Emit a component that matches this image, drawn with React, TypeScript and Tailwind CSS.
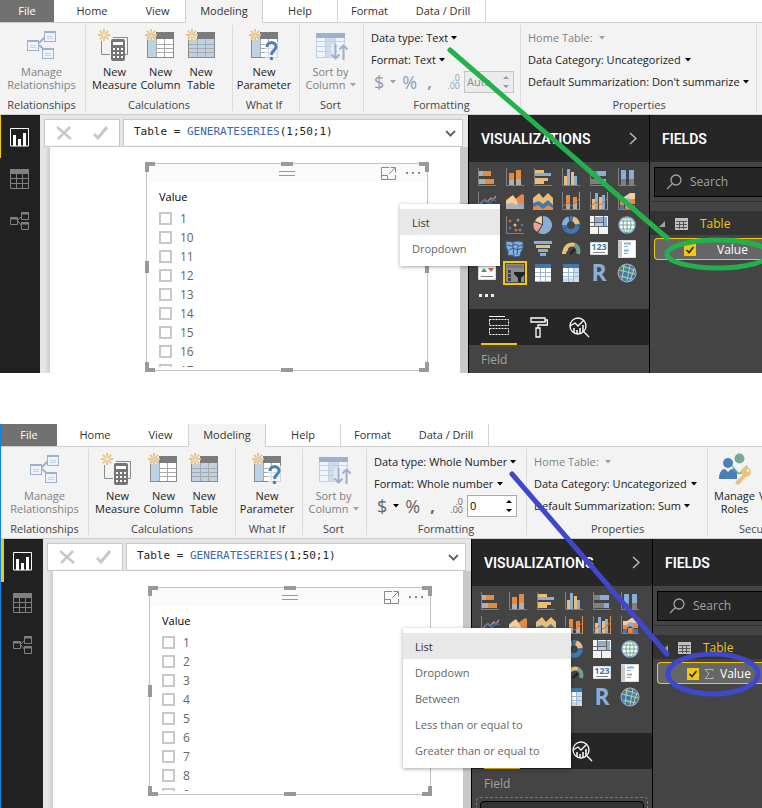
import type { ReactNode } from "react";
import clsx from "clsx";

type Report = {
  framed: boolean;
  dataType: string;
  format: string;
  decimals: string;
  summarization: string;
  numeric: boolean;
  values: string[];
  menu: string[];
};

const textReport: Report = {
  framed: false,
  dataType: "Text",
  format: "Text",
  decimals: "Auto",
  summarization: "Don't summarize",
  numeric: false,
  values: ["1", "10", "11", "12", "13", "14", "15", "16", "17"],
  menu: ["List", "Dropdown"],
};

const numberReport: Report = {
  framed: true,
  dataType: "Whole Number",
  format: "Whole number",
  decimals: "0",
  summarization: "Sum",
  numeric: true,
  values: ["1", "2", "3", "4", "5", "6", "7", "8", "9"],
  menu: [
    "List",
    "Dropdown",
    "Between",
    "Less than or equal to",
    "Greater than or equal to",
  ],
};

/* ---------- ribbon icons ---------- */

const Star = ({ x = 0, y = 0 }: { x?: number; y?: number }) => (
  <g transform={`translate(${x} ${y})`} stroke="#eec27c" strokeWidth="1.8">
    <path d="M6 0v3.4M6 8.6V12M0 6h3.4M8.6 6H12M1.8 1.8l2.4 2.4M7.8 7.8l2.4 2.4M10.2 1.8L7.8 4.2M4.2 7.8l-2.4 2.4" />
    <circle cx="6" cy="6" r="2" fill="none" strokeWidth="1" />
  </g>
);

const RelationshipsIcon = () => (
  <svg width="34" height="34" fill="none">
    <path d="M14 16l8-8M14 18l8 7" stroke="#9fb0cc" strokeWidth="2" />
    {[
      [2, 13],
      [19, 4],
      [17, 21],
    ].map(([x, y]) => (
      <g key={x}>
        <rect x={x + 0.5} y={y + 0.5} width="11" height="10" fill="#eef4fb" stroke="#9fb0cc" />
        <path d={`M${x} ${y + 1}h12`} stroke="#9fb0cc" strokeWidth="2" />
        <path d={`M${x + 3} ${y + 5.5}h6M${x + 3} ${y + 7.5}h6`} stroke="#c3d1e6" />
      </g>
    ))}
  </svg>
);

const MeasureIcon = () => (
  <svg width="34" height="34" fill="none">
    <path d="M16 10.500H30.500V27.500H28M4.500 14V27.500H13" stroke="#8a8a8a" />
    <rect x="14" y="12" width="14" height="22" rx="2" fill="#757575" />
    <rect x="16" y="15" width="10" height="3" fill="#fff" />
    {[21, 25, 29].map((y) =>
      [16, 20, 24].map((x) => (
        <rect key={`${x}-${y}`} x={x} y={y} width="2" height="2" fill="#fff" />
      ))
    )}
    <Star x={1} y={2} />
  </svg>
);

const GridIcon = ({ whole, question }: { whole?: boolean; question?: boolean }) => (
  <svg width="34" height="34" fill="none">
    <rect x="4.500" y="7.500" width="26" height="23" fill="#fff" stroke="#8a8a8a" />
    <path d={whole ? "M5 12h25v18H5z" : "M5 8h8v22H5z"} fill="#bdd2e6" />
    <path
      d={
        whole
          ? "M5 17.500H30M5 21.500H30M5 25.500H30M13.500 12V30M21.500 12V30"
          : "M13 17.500H30M13 21.500H30M13 25.500H30M13.500 12V30M21.500 12V30"
      }
      stroke="#a9a9a9"
    />
    <path d="M13 5h18v7H13z" fill="#7b7b7b" />
    {question && (
      <>
        <path d="M18 15h13v18H18z" fill="#f3f3f3" opacity="0.700" />
        <path
          d="M20 20c0-6 9-6 9 0 0 3.500-4.500 3.500-4.500 8"
          stroke="#4a80b8"
          strokeWidth="3"
        />
        <circle cx="24.500" cy="31.500" r="1.800" fill="#4a80b8" />
      </>
    )}
    <path d="M2 2h10v11H2z" fill="#f3f3f3" opacity="0.600" />
    <Star x={2} y={2} />
  </svg>
);

const SortIcon = () => (
  <svg width="34" height="34" fill="none">
    <rect x="2.500" y="6.500" width="28" height="24" fill="#eff5fc" stroke="#c3cfe2" />
    <path d="M12 10h9v20h-9z" fill="#cfdcee" />
    <path d="M2 14.500h29M2 19.500h29M2 24.500h29M11.500 10v20M21.500 10v20" stroke="#c3cfe2" />
    <path d="M2 6h29v5H2z" fill="#9fb0cc" />
    <path d="M17 17h15v16H17z" fill="#f3f3f3" opacity="0.600" />
    <path
      d="M21.500 17v15M17.500 27.500l4 4 4-4M29.500 33V18M25.500 22.500l4-4 4 4"
      stroke="#9fb0cc"
      strokeWidth="2"
    />
  </svg>
);

const RolesIcon = () => (
  <svg width="34" height="34" fill="none">
    <circle cx="21.500" cy="7.500" r="5" fill="#78a898" />
    <path d="M14 14l7 8 8-8 1 9H16z" fill="#78a898" />
    <circle cx="10" cy="12" r="5" fill="#4a80b8" />
    <path d="M1 28c0-7 3-10 6-10l3 3 3-3c4 0 7 3 6 10z" fill="#4a80b8" />
    <circle cx="28" cy="21" r="5" fill="#eec27c" />
    <circle cx="30" cy="19.500" r="1.300" fill="#fff" />
    <path d="M26 23l-8 8v2h3l7-8z" fill="#eec27c" stroke="#eec27c" />
  </svg>
);

const Caret = ({ muted }: { muted?: boolean }) => (
  <svg
    width="6"
    height="4"
    className={clsx("shrink-0", muted ? "text-gray-400" : "text-black")}
  >
    <path d="M0 0h6L3 3.500z" fill="currentColor" />
  </svg>
);

/* ---------- ribbon ---------- */

const Group = ({
  label,
  className,
  children,
}: {
  label: string;
  className: string;
  children: ReactNode;
}) => (
  <section
    className={clsx(
      "flex h-[86px] shrink-0 flex-col border-r border-[#dcdcdc]",
      className
    )}
  >
    {children}
    <h3 className="mt-auto text-center leading-3 text-[#444]">{label}</h3>
  </section>
);

const BigButton = ({
  icon,
  lines,
  caret,
  disabled,
}: {
  icon: ReactNode;
  lines: [string, string];
  caret?: boolean;
  disabled?: boolean;
}) => (
  <button
    disabled={disabled}
    className="flex flex-col items-center pt-0.5 whitespace-nowrap leading-[13px] text-[#222] disabled:text-[#808080]"
  >
    <span className="mb-1">{icon}</span>
    <span>{lines[0]}</span>
    <span className="flex items-center gap-1">
      {lines[1]}
      {caret && <Caret muted />}
    </span>
  </button>
);

const Picker = ({
  label,
  value,
  disabled,
}: {
  label: string;
  value?: string;
  disabled?: boolean;
}) => (
  <label
    className={clsx(
      "flex h-[22px] items-center gap-[3px] whitespace-nowrap",
      disabled ? "text-[#808080]" : "text-[#222]"
    )}
  >
    {label}
    <select className="appearance-none" disabled={disabled} defaultValue={value}>
      <option>{value}</option>
    </select>
    <Caret muted={disabled} />
  </label>
);

const Tab = ({ name, className }: { name: string; className: string }) => (
  <button className={clsx("h-[22px] text-[#333]", className)}>{name}</button>
);

const Ribbon = ({ report }: { report: Report }) => {
  const { framed, numeric } = report;
  return (
    <header className="text-[11px]">
      <nav className="flex h-[23px] border-b border-[#cfcfcf] bg-white">
        <button
          className={clsx("h-[22px] bg-[#717171] text-white", framed ? "w-[56px]" : "w-[54px]")}
        >
          File
        </button>
        <Tab name="Home" className="w-[76px]" />
        <Tab name="View" className="w-[55px]" />
        <button className="-mb-px h-[23px] w-[78px] border-x border-[#cfcfcf] bg-[#f3f3f3] text-[#333]">
          Modeling
        </button>
        <Tab name="Help" className="w-[75px] border-r border-[#d4d4d4]" />
        <Tab name="Format" className="w-[63px]" />
        <Tab name="Data / Drill" className="w-[85px] border-r border-[#d4d4d4]" />
      </nav>
      <div
        className={clsx(
          "flex overflow-hidden border-b border-[#cfcfcf] bg-[#f3f3f3] pt-0.5 pb-[3px]",
          framed && "pl-0.5"
        )}
      >
        <Group label="Relationships" className="w-[86px] pr-1.5 pl-1">
          <BigButton disabled icon={<RelationshipsIcon />} lines={["Manage", "Relationships"]} />
        </Group>
        <Group label="Calculations" className="w-[147px] px-1.5">
          <div className="flex justify-between pr-2">
            <BigButton icon={<MeasureIcon />} lines={["New", "Measure"]} />
            <BigButton icon={<GridIcon />} lines={["New", "Column"]} />
            <BigButton icon={<GridIcon whole />} lines={["New", "Table"]} />
          </div>
        </Group>
        <Group label="What If" className="w-[67px] pr-1">
          <BigButton icon={<GridIcon question />} lines={["New", "Parameter"]} />
        </Group>
        <Group label="Sort" className="w-[64px] pr-0.5">
          <BigButton disabled caret icon={<SortIcon />} lines={["Sort by", "Column"]} />
        </Group>
        <Group label="Formatting" className={clsx("pt-0.5 pr-2 pl-[7px]", numeric ? "w-[160px]" : "w-[157px]")}>
          <Picker label="Data type:" value={report.dataType} />
          <Picker label="Format:" value={report.format} />
          <div
            className={clsx(
              "flex h-[22px] w-[143px] shrink-0 items-center pl-[3px]",
              numeric ? "text-[#666]" : "text-[#8c9cb8]"
            )}
          >
            <button aria-label="Currency" className="flex items-center gap-1.5 text-lg leading-5">
              $<Caret muted={!numeric} />
            </button>
            <button aria-label="Percent" className="ml-1.5 text-lg leading-5">%</button>
            <button aria-label="Thousands separator" className="ml-2.5 text-base leading-5 font-bold">,</button>
            <button
              aria-label="Decimal places"
              className="mr-1 ml-auto flex flex-col items-end text-[9px] leading-[8px]"
            >
              <span>.0</span>
              <span>.00</span>
            </button>
            <div
              className={clsx(
                "flex h-[22px] w-[50px] items-center border pr-1",
                numeric ? "border-[#ababab] bg-white text-black" : "border-[#c6c6c6] bg-[#ebebeb] text-[#8a8a8a]"
              )}
            >
              <input
                aria-label="Decimals"
                defaultValue={report.decimals}
                disabled={!numeric}
                className="w-0 flex-1 pl-0.5"
              />
              <svg width="6" height="14" className={numeric ? "text-black" : "text-[#8c9cb8]"}>
                <path d="M0 4h6L3 1zM0 10h6l-3 3z" fill="currentColor" />
              </svg>
            </div>
          </div>
        </Group>
        <Group label="Properties" className={clsx("pt-0.5 pr-1.5 pl-[7px]", numeric ? "w-[181px]" : "w-[236px]")}>
          <Picker disabled label="Home Table:" />
          <Picker label="Data Category:" value="Uncategorized" />
          <Picker label="Default Summarization:" value={report.summarization} />
        </Group>
        <Group label="Security" className="w-[98px] pl-1.5">
          <div className="flex gap-1">
            <BigButton icon={<RolesIcon />} lines={["Manage", "Roles"]} />
            <BigButton icon={<RolesIcon />} lines={["View as", "Roles"]} />
          </div>
        </Group>
      </div>
    </header>
  );
};

/* ---------- left navigation ---------- */

const SideNav = ({ framed }: { framed: boolean }) => (
  <nav
    className={clsx(
      "flex shrink-0 flex-col bg-[#212121] text-[#808080]",
      framed ? "w-[42px]" : "w-10"
    )}
  >
    <button
      aria-label="Report"
      className={clsx(
        "flex h-[43px] items-center border-[#f2c80f] pt-0.5 pl-[9px] text-white",
        framed ? "border-l-[3px]" : "border-l"
      )}
    >
      <svg width="19" height="19" fill="none" stroke="currentColor">
        <path d="M.5.500h18v17.500H.5z" />
        <path d="M4.500 7v11M9.500 11v7M14.500 5v13" strokeWidth="3" />
      </svg>
    </button>
    <button aria-label="Data" className={clsx("flex h-[42px] items-center", framed ? "pl-3" : "pl-2.5")}>
      <svg width="19" height="20" fill="none" stroke="currentColor">
        <path d="M.5.500h18v19H.5zM0 9.500h19M0 14.500h19M6.500 5v15M12.500 5v15" />
        <path d="M0 2.500h19" strokeWidth="5" />
      </svg>
    </button>
    <button aria-label="Model" className={clsx("flex h-[42px] items-center", framed ? "pl-3" : "pl-2.5")}>
      <svg width="19" height="18" fill="none" stroke="currentColor">
        <path d="M.5 5.500h7v7h-7zM11.500.500h7v7h-7zM11.500 10.500h7v7h-7z" />
        <path d="M0 6.500h8M11 1.500h8M11 11.500h8" strokeWidth="2" />
        <path d="M8 8l3-3M8 9l3 4" />
      </svg>
    </button>
  </nav>
);

/* ---------- canvas ---------- */

const Slicer = ({ values, id }: { values: string[]; id: string }) => (
  <article className="relative mt-4 mr-8 ml-24 border border-[#c4c4c4] bg-white pb-[3px]">
    <div className="flex h-[18px] items-center bg-[#fafafa] px-1.5">
      <span className="flex-1" />
      <svg width="16" height="5" stroke="#999">
        <path d="M0 .5h16M0 4.500h16" />
      </svg>
      <div className="flex flex-1 items-center justify-end gap-2.5 text-[#888]">
        <button aria-label="Focus mode">
          <svg width="15" height="13" fill="none" stroke="currentColor">
            <path d="M8 .5H.5v12h14V8M.5 8.500h6v4M8 7l6-6M9.500.500h5v5" />
          </svg>
        </button>
        <button aria-label="More options">
          <svg width="15" height="2" fill="currentColor">
            <path d="M0 0h2v2H0zM6 0h2v2H6zM12 0h2v2h-2z" />
          </svg>
        </button>
      </div>
    </div>
    <h2 className="mt-[7px] pl-3 leading-4 text-black">Value</h2>
    <ul className="mt-1 h-[158px] overflow-hidden pl-3">
      {values.map((v) => (
        <li key={v} className="flex h-[19px] items-center gap-2">
          <input
            type="checkbox"
            id={`${id}-${v}`}
            className="size-[13px] appearance-none border-2 border-[#c8c8c8] bg-white"
          />
          <label htmlFor={`${id}-${v}`} className="text-xs text-[#666]">
            {v}
          </label>
        </li>
      ))}
    </ul>
    <i className="absolute -top-0.5 -left-0.5 size-2.5 border-t-4 border-l-4 border-[#999]" />
    <i className="absolute -top-0.5 -right-0.5 size-2.5 border-t-4 border-r-4 border-[#999]" />
    <i className="absolute -bottom-0.5 -left-0.5 size-2.5 border-b-4 border-l-4 border-[#999]" />
    <i className="absolute -right-0.5 -bottom-0.5 size-2.5 border-r-4 border-b-4 border-[#999]" />
    <i className="absolute -top-0.5 left-1/2 h-1 w-3 -translate-x-1/2 bg-[#999]" />
    <i className="absolute -bottom-0.5 left-1/2 h-1 w-3 -translate-x-1/2 bg-[#999]" />
    <i className="absolute top-1/2 -left-0.5 h-3 w-1 -translate-y-1/2 bg-[#999]" />
    <i className="absolute top-1/2 -right-0.5 h-3 w-1 -translate-y-1/2 bg-[#999]" />
  </article>
);

const Canvas = ({ report }: { report: Report }) => (
  <main className="flex min-w-0 flex-1 flex-col bg-[#e6e6e6] text-[11px]">
    <div className="flex h-8 gap-[3px] pt-1 pr-[5px] pl-1">
      <div className="flex w-[76px] items-center justify-around border border-[#c8c8c8] bg-white text-[#c8c8c8]">
        <button aria-label="Cancel">
          <svg width="16" height="14" fill="none" stroke="currentColor" strokeWidth="2.500">
            <path d="M1 1l14 12M14 1L2 13" />
          </svg>
        </button>
        <button aria-label="Commit">
          <svg width="15" height="14" fill="none" stroke="currentColor" strokeWidth="3">
            <path d="M1 8l4 4 9-11" />
          </svg>
        </button>
      </div>
      <div className="flex flex-1 justify-between border border-[#c8c8c8] bg-white pr-1.5 pl-2.5">
        <div
          role="textbox"
          aria-label="Formula"
          contentEditable
          suppressContentEditableWarning
          className="py-1 font-['DejaVu_Sans_Mono',monospace] leading-4 whitespace-pre text-[#222]"
        >
          Table = <span className="text-[#3a66b8]">GENERATESERIES</span>(1;50;1)
        </div>
        <button aria-label="Expand formula">
          <svg width="11" height="7" fill="none" stroke="#666" strokeWidth="2">
            <path d="M1 1l4.500 4.500L10 1" />
          </svg>
        </button>
      </div>
    </div>
    <div className="mr-2 ml-2.5 flex-1 bg-white shadow-[8px_0_0_#c8c8c8,-3px_0_3px_#cfcfcf]">
      <Slicer values={report.values} id={report.numeric ? "num" : "text"} />
    </div>
  </main>
);

/* ---------- visualizations pane ---------- */

const ORANGE = "#e58b3f";
const TAN = "#e9bf78";
const SKY = "#8aafd6";
const BLUE = "#3f78b5";
const GREY = "#b0b0b0";
const DIM = "#808080";
const RED = "#d9603b";

const Axis = () => <path d="M.5 0v17.500H18" fill="none" stroke={DIM} />;

const Box = ({ x, y, w, h, c }: { x: number; y: number; w: number; h: number; c: string }) => (
  <rect x={x} y={y} width={w} height={h} fill={c} />
);

const visuals: { name: string; art: ReactNode }[] = [
  {
    name: "Stacked bar chart",
    art: (
      <>
        <Axis />
        <Box x={1} y={3} w={4} h={5} c={GREY} />
        <Box x={5} y={3} w={8} h={5} c={ORANGE} />
        <Box x={1} y={11} w={7} h={5} c={GREY} />
        <Box x={7} y={11} w={9} h={5} c={ORANGE} />
      </>
    ),
  },
  {
    name: "Stacked column chart",
    art: (
      <>
        <Axis />
        <Box x={3} y={5} w={5} h={7} c={ORANGE} />
        <Box x={3} y={12} w={5} h={5} c={GREY} />
        <Box x={10} y={2} w={5} h={9} c={ORANGE} />
        <Box x={10} y={11} w={5} h={6} c={GREY} />
      </>
    ),
  },
  {
    name: "Clustered bar chart",
    art: (
      <>
        <Axis />
        <Box x={1} y={2} w={9} h={3} c={TAN} />
        <Box x={1} y={5} w={16} h={3} c={SKY} />
        <Box x={1} y={10} w={13} h={3} c={TAN} />
        <Box x={1} y={13} w={9} h={3} c={TAN} />
      </>
    ),
  },
  {
    name: "Clustered column chart",
    art: (
      <>
        <Axis />
        <Box x={2} y={8} w={3} h={9} c={TAN} />
        <Box x={5} y={1} w={3} h={16} c={SKY} />
        <Box x={9} y={4} w={3} h={13} c={TAN} />
        <Box x={12} y={8} w={3} h={9} c={SKY} />
      </>
    ),
  },
  {
    name: "100% stacked bar chart",
    art: (
      <>
        <Axis />
        <Box x={1} y={3} w={6} h={5} c={DIM} />
        <Box x={7} y={3} w={9} h={5} c={SKY} />
        <Box x={1} y={11} w={10} h={5} c={DIM} />
        <Box x={11} y={11} w={5} h={5} c={SKY} />
      </>
    ),
  },
  {
    name: "100% stacked column chart",
    art: (
      <>
        <Axis />
        <Box x={3} y={2} w={5} h={9} c={SKY} />
        <Box x={3} y={11} w={5} h={6} c={DIM} />
        <Box x={11} y={2} w={5} h={9} c={SKY} />
        <Box x={11} y={11} w={5} h={6} c={DIM} />
      </>
    ),
  },
  {
    name: "Line chart",
    art: (
      <>
        <Axis />
        <path d="M1 13l5-5 3 2 4-4 2 2 3-4" fill="none" stroke="#c98a80" strokeWidth="1.300" />
        <path d="M1 15l6-8 4 5 4-5 3 2" fill="none" stroke={BLUE} strokeWidth="1.300" />
      </>
    ),
  },
  {
    name: "Area chart",
    art: (
      <>
        <path d="M0 17V8l5-4 4 3 7-5 2 1v14z" fill={ORANGE} />
        <path d="M0 13V9l7-6 4 6 2 5z" fill="#f0cfa0" />
        <path d="M0 17v-5l6-1 12 6z" fill={GREY} />
        <path d="M10 13l4-2 4 2v4z" fill={SKY} />
      </>
    ),
  },
  {
    name: "Stacked area chart",
    art: (
      <>
        <path d="M-1 15V6l6-5 4 5 5-5 5 5v9z" fill={TAN} />
        <path d="M-1 17v-6l6-2 4 3 5-4 5 5v4z" fill={BLUE} />
        <path d="M-1 18v-3l5-2 5 4 5-4 5 3v2z" fill={ORANGE} />
      </>
    ),
  },
  {
    name: "Line and stacked column chart",
    art: (
      <>
        <Axis />
        <path d="M17.500 0v18" stroke={ORANGE} />
        <Box x={4} y={3} w={4} h={9} c={ORANGE} />
        <Box x={4} y={12} w={4} h={5} c={GREY} />
        <Box x={11} y={5} w={4} h={6} c={ORANGE} />
        <Box x={11} y={11} w={4} h={6} c={GREY} />
        <path d="M1 14l5-3 4 3 7-7" fill="none" stroke={RED} />
      </>
    ),
  },
  {
    name: "Line and clustered column chart",
    art: (
      <>
        <Axis />
        <path d="M17.500 0v18" stroke={ORANGE} />
        <Box x={2} y={7} w={3} h={10} c={TAN} />
        <Box x={5} y={1} w={3} h={16} c={SKY} />
        <Box x={9} y={5} w={3} h={12} c={TAN} />
        <Box x={12} y={3} w={3} h={14} c={SKY} />
        <path d="M1 14l5-4 4 3 7-6" fill="none" stroke={RED} />
      </>
    ),
  },
  {
    name: "Ribbon chart",
    art: (
      <>
        <Axis />
        <path d="M2 5h4l6-4h5v6h-5l-6 3H2z" fill="#f0cfa0" />
        <path d="M6 8l3-2 3 1v5l-3-2-3 2z" fill={SKY} />
        <path d="M2 9h4v4H2zM12 7h5v5h-5zM7 12h4v5H7z" fill={ORANGE} />
        <path d="M2 13h4v4H2zM13 13h4v4h-4z" fill={BLUE} />
        <path d="M11 12h2v5h-2z" fill={RED} />
      </>
    ),
  },
  {
    name: "Waterfall chart",
    art: (
      <>
        <Axis />
        <Box x={2} y={9} w={4} h={8} c={SKY} />
        <Box x={7} y={5} w={4} h={5} c={ORANGE} />
        <Box x={12} y={2} w={4} h={15} c={SKY} />
      </>
    ),
  },
  {
    name: "Scatter chart",
    art: (
      <>
        <Axis />
        <circle cx="4" cy="5" r="1.500" fill={RED} />
        <circle cx="12" cy="4" r="1.500" fill="#6f9f90" />
        <circle cx="9" cy="9" r="1.500" fill={TAN} />
        <circle cx="4" cy="12" r="1.500" fill={BLUE} />
        <circle cx="10" cy="14" r="1.500" fill={RED} />
        <circle cx="16" cy="9" r="1.500" fill={BLUE} />
        <circle cx="14" cy="14" r="1.500" fill={DIM} />
      </>
    ),
  },
  {
    name: "Pie chart",
    art: (
      <>
        <path d="M9 9V0a9 9 0 1 1-5 16.500z" fill={SKY} />
        <path d="M8 8V0a9 9 0 0 0-7 5z" fill="#f0cfa0" />
        <path d="M8 9L0 6a9 9 0 0 0 3 10z" fill="#e3a596" />
      </>
    ),
  },
  {
    name: "Donut chart",
    art: (
      <g fill="none" strokeWidth="5">
        <circle cx="9" cy="9" r="6.500" stroke={BLUE} />
        <path d="M11 2.800A6.500 6.500 0 0 1 15.300 8" stroke={TAN} />
        <path d="M2.500 9A6.500 6.500 0 0 1 7 2.800" stroke={SKY} />
        <path d="M15.500 9.500l2.500.5M2 13l3-2M7 0l1 5" stroke="#444" strokeWidth="1" />
      </g>
    ),
  },
  {
    name: "Treemap",
    art: (
      <>
        <path d="M0 0h18v18H0z" fill="#f4f4f4" />
        <path d="M5 1h8v5H5zM14 1h3v9h-3z" fill={SKY} />
        <path d="M5 7h8v3H5z" fill="#b9cee6" />
        <path d="M4.500 0v11M0 10.500h18M8.500 11v7M13.500 0v10M5 6.500h8M0 6.500h4" stroke="#666" fill="none" />
      </>
    ),
  },
  {
    name: "Map",
    art: (
      <>
        <circle cx="9" cy="9" r="8" fill="#fff" stroke={SKY} strokeWidth="1.500" />
        <ellipse cx="9" cy="9" rx="4" ry="8" fill="none" stroke="#6ea78f" />
        <path d="M9 1v16M1 9h16M2.500 5h13M2.500 13h13" stroke="#6ea78f" />
      </>
    ),
  },
  {
    name: "Filled map",
    art: <path d="M1 2h7l3 3 6-3v13l-5-2-4 4-7-3z" fill={SKY} />,
  },
  {
    name: "Shape map",
    art: (
      <>
        <path d="M0 1l6 1 6-1 5 1v6l-2 4-1 4-5 1-4-2-3 1V11l-2-4z" fill={SKY} stroke="#2f5d94" />
        <path d="M1 5l5 1 3-2 4 2 4-1M3 10l4-2 4 2 5-2M7 2v6l1 8M12 6l-1 9" stroke="#2f5d94" fill="none" />
      </>
    ),
  },
  {
    name: "Funnel",
    art: (
      <>
        <Box x={0} y={1} w={18} h={3} c={SKY} />
        <Box x={2} y={5} w={14} h={3} c={TAN} />
        <Box x={4} y={9} w={10} h={3} c={SKY} />
        <Box x={6} y={13} w={6} h={3} c={SKY} />
      </>
    ),
  },
  {
    name: "Gauge",
    art: (
      <g fill="none" strokeWidth="4">
        <path d="M2 14a7 7 0 0 1 3.500-6" stroke={TAN} />
        <path d="M3 10a7.500 7.500 0 0 1 10-5" stroke={TAN} />
        <path d="M13 5a8 8 0 0 1 3 9" stroke="#6f9f90" />
        <path d="M8 14l5-5" stroke="#222" strokeWidth="2" />
      </g>
    ),
  },
  {
    name: "Card",
    art: (
      <>
        <path d="M.5 2.500h17v12H.5z" fill="#fff" stroke="#ddd" />
        <text x="9" y="10" textAnchor="middle" fontSize="9" fontWeight="700" fill={BLUE}>
          123
        </text>
        <path d="M3 12.500h12" stroke={DIM} />
      </>
    ),
  },
  {
    name: "Multi-row card",
    art: (
      <>
        <path d="M.5.500h17v17H.5z" fill="#fff" stroke="#ddd" />
        <path d="M0 1h4v16H0z" fill="#c9c9c9" />
        <path d="M6 3.500h7M6 10.500h5" stroke={SKY} strokeWidth="2" />
        <path d="M6 6.500h4M6 13.500h4" stroke={SKY} />
      </>
    ),
  },
  {
    name: "KPI",
    art: (
      <>
        <path d="M.5 2.500h17v13H.5z" fill="#fff" stroke="#ddd" />
        <path d="M3 8l3-4 3 4z" fill="#4e9a7c" />
        <path d="M10 4h6l-3 4z" fill={RED} />
        <path d="M3 12.500h12" stroke={DIM} />
      </>
    ),
  },
  {
    name: "Slicer",
    art: (
      <>
        <path d="M0 0h18v18H0z" fill="#8c8c8c" />
        <path d="M1 1h16v3H1z" fill="#777" />
        <path d="M2 6h3v3H2zM2 10h3v3H2zM2 14h3v3H2z" fill="#444" />
        <path d="M8 8h11v2l-4 4v4h-3v-4l-4-4z" fill="#222" />
      </>
    ),
  },
  {
    name: "Table",
    art: (
      <>
        <path d="M1 0h16v18H1z" fill="#fff" />
        <path d="M1 0h16v4H1z" fill={BLUE} />
        <path d="M1 8.500h16M1 12.500h16M6.500 4v14M11.500 4v14M1 17.500h16" stroke="#9db7d3" />
      </>
    ),
  },
  {
    name: "Matrix",
    art: (
      <>
        <path d="M1 0h16v18H1z" fill="#fff" />
        <path d="M12 4h5v14h-5zM1 14h16v4H1z" fill="#ccdcec" />
        <path d="M1 0h16v4H1z" fill={BLUE} />
        <path d="M1 8.500h16M1 12.500h16M6.500 4v14M11.500 4v14" stroke="#9db7d3" />
      </>
    ),
  },
  {
    name: "R script visual",
    art: (
      <text x="9" y="17" textAnchor="middle" fontSize="23" fontWeight="700" fill={SKY}>
        R
      </text>
    ),
  },
  {
    name: "ArcGIS map",
    art: (
      <>
        <circle cx="9" cy="9" r="9" fill="#3976b0" stroke="#b5b5b5" />
        <path d="M3 4l5-2 1 4-4 3zM11 8l4-3 2 4-4 3zM4 12l4-1 1 5-3-1z" fill="#3fa35f" />
        <path d="M1 6l16 4M2 12l13 3M4 2l13 4M6 1l-2 15M12 1L9 17M16 5l-4 12" stroke="#c4c4c4" fill="none" />
      </>
    ),
  },
];

const Visualizations = ({ numeric }: { numeric: boolean }) => (
  <aside className="flex w-[181px] shrink-0 flex-col border-l border-black bg-[#444]">
    <div className="flex h-[47px] items-center justify-between bg-[#262626] pr-3 pl-3 text-white">
      <h2 className="font-[Roboto,sans-serif] text-sm font-semibold">VISUALIZATIONS</h2>
      <button aria-label="Collapse">
        <svg width="8" height="13" fill="none" stroke="#bbb" strokeWidth="1.500">
          <path d="M1 1l6 5.500L1 12" />
        </svg>
      </button>
    </div>
    <div className="grid grid-cols-[repeat(6,28px)] pt-[3px] pl-1">
      {visuals.map(({ name, art }) => (
        <button
          key={name}
          aria-label={name}
          className="flex h-6 w-7 items-center justify-center"
        >
          <svg
            width="18"
            height="18"
            overflow="visible"
            className={clsx(name === "Slicer" && "outline-2 outline-offset-1 outline-[#f2c80f]")}
          >
            {art}
          </svg>
        </button>
      ))}
    </div>
    <button aria-label="Import visual" className="mb-1 h-5 pl-2.5">
      <svg width="16" height="3" fill="#eee">
        <path d="M0 0h3v3H0zM6 0h3v3H6zM12 0h3v3h-3z" />
      </svg>
    </button>
    <div className="flex h-9 shrink-0 bg-[#262626] pl-3 text-white">
      <button aria-label="Fields" className="flex w-9 items-center justify-center border-b-2 border-[#f2c80f]">
        <svg width="20" height="20" fill="none" stroke="currentColor">
          <path d="M0 .5h16" />
          <path d="M.5 3.500h19v6H.5zM.5 12.500h19v6H.5z" strokeDasharray="2 1" />
        </svg>
      </button>
      <button aria-label="Format" className="flex w-11 items-center justify-center">
        <svg width="18" height="21" fill="none" stroke="currentColor" strokeWidth="1.300">
          <path d="M1 1h14v4H1zM15 3h2.300v5H8v3M6 11h4v9H6z" />
        </svg>
      </button>
      <button aria-label="Analytics" className="flex w-9 items-center justify-center">
        <svg width="21" height="21" fill="none" stroke="currentColor" strokeWidth="1.300">
          <circle cx="9" cy="9" r="8" />
          <path d="M15 15l5 5M1 9l5-3 3 3 6-6" />
          <path d="M5 16v-5M8 17v-4M11 17v-6M14 15V8" strokeWidth="1.500" />
        </svg>
      </button>
    </div>
    <h3 className="pt-1.5 pl-3 text-xs leading-[18px] text-[#a3a3a3]">Field</h3>
    {numeric && (
      <div className="mx-1 mt-1 h-8 rounded border border-dashed border-[#777] p-[3px]">
        <div className="h-6 rounded border border-black bg-[#333]" />
      </div>
    )}
  </aside>
);

/* ---------- fields pane ---------- */

const Fields = ({ framed, numeric }: { framed: boolean; numeric: boolean }) => (
  <aside
    className={clsx(
      "shrink-0 overflow-hidden border-l border-black bg-[#444] text-xs",
      framed ? "w-[110px]" : "w-[113px]"
    )}
  >
    <div className="flex h-[47px] items-center bg-[#262626] pl-3 text-white">
      <h2 className="font-[Roboto,sans-serif] text-sm font-semibold">FIELDS</h2>
    </div>
    <label className="mt-[5px] ml-1 flex h-[30px] items-center gap-2 border border-r-0 border-black bg-[#262626] pl-[11px] text-[#a3a3a3]">
      <svg width="16" height="16" fill="none" stroke="currentColor" strokeWidth="1.300" className="shrink-0">
        <circle cx="10" cy="6" r="5" />
        <path d="M6.500 9.500L1 15" />
      </svg>
      <input
        placeholder="Search"
        aria-label="Search"
        className="w-0 flex-1 placeholder:text-[#a3a3a3]"
      />
    </label>
    <div className="mt-1 h-2.5 border-t border-[#333]" />
    <div className="flex h-6 items-center bg-[#333] pt-0.5 pl-[9px] text-[#f2c80f]">
      <svg width="6" height="6" fill="#a3a3a3">
        <path d="M6 0v6H0z" />
      </svg>
      <svg width="13" height="12" fill="none" stroke="#555" className="mr-3 ml-2.5">
        <path d="M0 0h13v12H0z" fill="#c0c0c0" stroke="none" />
        <path d="M1 3.500h11M1 6.500h11M1 9.500h11M4.500 4v7M8.500 4v7" />
      </svg>
      Table
    </div>
    <label className="mt-[3px] ml-1 flex h-[22px] items-center rounded-l-sm border border-r-0 border-[#f2c80f] bg-[#666] pt-0.5 pl-[29px] text-white">
      <span className="relative flex size-3 shrink-0">
        <input
          type="checkbox"
          defaultChecked
          className="size-3 appearance-none bg-[#f2c80f]"
        />
        <svg width="12" height="12" fill="none" stroke="#222" strokeWidth="1.600" className="absolute inset-0">
          <path d="M2.500 6L5 8.500 9.500 3" />
        </svg>
      </span>
      <span className="w-[21px] pl-[5px]">
        {numeric && (
          <svg width="10" height="10" fill="none" stroke="#b5b5b5">
            <path d="M9 2V.500H1L5 5 1 9.500h8V8" />
          </svg>
        )}
      </span>
      Value
    </label>
  </aside>
);

/* ---------- slicer type menu ---------- */

const TypeMenu = ({ items, className }: { items: string[]; className: string }) => (
  <ul
    role="menu"
    className={clsx(
      "absolute top-[204px] bg-white py-[5px] text-[11px] shadow-[0_1px_4px_rgba(0,0,0,0.35)]",
      className
    )}
  >
    {items.map((item) => (
      <li key={item} role="none">
        <button
          role="menuitem"
          className={clsx(
            "h-[26px] w-full pt-0.5 pl-3 text-left",
            item === "List" ? "bg-[#e8e8e8] text-[#333]" : "text-[#666]"
          )}
        >
          {item}
        </button>
      </li>
    ))}
  </ul>
);

const ReportWindow = ({
  report,
  className,
  children,
}: {
  report: Report;
  className?: string;
  children: ReactNode;
}) => (
  <section className={clsx("relative flex flex-col overflow-hidden", className)}>
    <Ribbon report={report} />
    <div className="flex flex-1">
      <SideNav framed={report.framed} />
      <Canvas report={report} />
      <Visualizations numeric={report.numeric} />
      <Fields framed={report.framed} numeric={report.numeric} />
    </div>
    <TypeMenu
      items={report.menu}
      className={report.numeric ? "left-[402px] w-[168px]" : "left-[400px] w-[100px]"}
    />
    <svg className="pointer-events-none absolute inset-0 size-full" fill="none" strokeLinecap="round">
      {children}
    </svg>
  </section>
);

export default function App() {
  return (
    <div className="flex min-h-screen flex-col gap-[51px] overflow-hidden bg-white font-['Open_Sans',sans-serif]">
      <ReportWindow report={textReport} className="h-[373px]">
        <g stroke="#22b14c" strokeWidth="5">
          <path d="M450 50L667 238" />
          <ellipse cx="718" cy="254" rx="51" ry="14" />
        </g>
      </ReportWindow>
      <ReportWindow report={numberReport} className="h-[384px] border-l border-[#1683d8]">
        <g stroke="#3f48cc" strokeWidth="5">
          <path d="M511 50L666 230" />
          <ellipse cx="712" cy="250" rx="45" ry="20" />
        </g>
      </ReportWindow>
    </div>
  );
}
